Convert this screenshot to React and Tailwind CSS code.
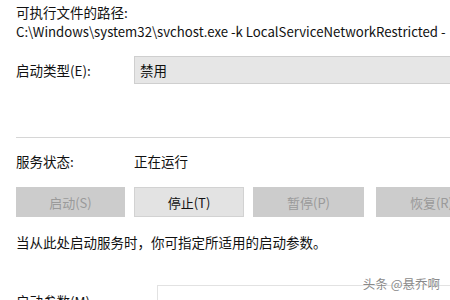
import React from "react";

const font = { fontFamily: '"Noto Sans CJK SC", "Noto Sans", sans-serif' };

const Btn = ({ label, disabled, w }) => (
  <button
    type="button"
    disabled={disabled}
    className={`${w} h-[30px] shrink-0 text-[13px] leading-none ${
      disabled
        ? "bg-[#cccccc] text-[#9a9a9a] border border-[#cccccc]"
        : "bg-[#e3e3e3] text-[#111] border border-[#d2d2d2]"
    }`}
  >
    {label}
  </button>
);

export default function App() {
  return (
    <div
      className="relative w-[450px] h-[300px] overflow-hidden bg-white pl-4 pt-[2px] text-[13.5px] text-[#111] leading-[20px]"
      style={font}
    >
      <p className="whitespace-nowrap">可执行文件的路径:</p>
      <p className="whitespace-nowrap text-[13.2px]">
        C:\Windows\system32\svchost.exe -k LocalServiceNetworkRestricted -
      </p>

      <div className="mt-[14px] flex items-center h-[28px]">
        <span className="w-[118px] shrink-0">启动类型(E):</span>
        <div className="flex-1 h-[28px] flex items-center pl-[5px] bg-[#e6e6e6] border border-[#cfcfcf] border-r-0">
          禁用
        </div>
      </div>

      <div className="mt-[53px] h-px bg-[#d6d6d6]" />

      <div className="mt-[13px] flex items-center">
        <span className="w-[118px] shrink-0">服务状态:</span>
        <span>正在运行</span>
      </div>

      <div className="mt-[16px] flex gap-[9px]">
        <Btn label="启动(S)" disabled w="w-[109px]" />
        <Btn label="停止(T)" w="w-[110px]" />
        <Btn label="暂停(P)" disabled w="w-[111px]" />
        <Btn label="恢复(R)" disabled w="w-[111px] ml-[3px]" />
      </div>

      <p className="mt-[15px] whitespace-nowrap">
        当从此处启动服务时，你可指定所适用的启动参数。
      </p>

      <div className="mt-[33px] flex items-start">
        <span className="w-[141px] shrink-0 pt-[6px]">启动参数(M):</span>
        <div className="flex-1 h-[30px] border border-[#e2e2e2] border-r-0" />
      </div>

      <div className="absolute right-[10px] top-[274px] text-[12.5px] text-[#8a8a8a] [text-shadow:0_0_2px_#fff] whitespace-nowrap">
        头条 @悬乔啊
      </div>
    </div>
  );
}
